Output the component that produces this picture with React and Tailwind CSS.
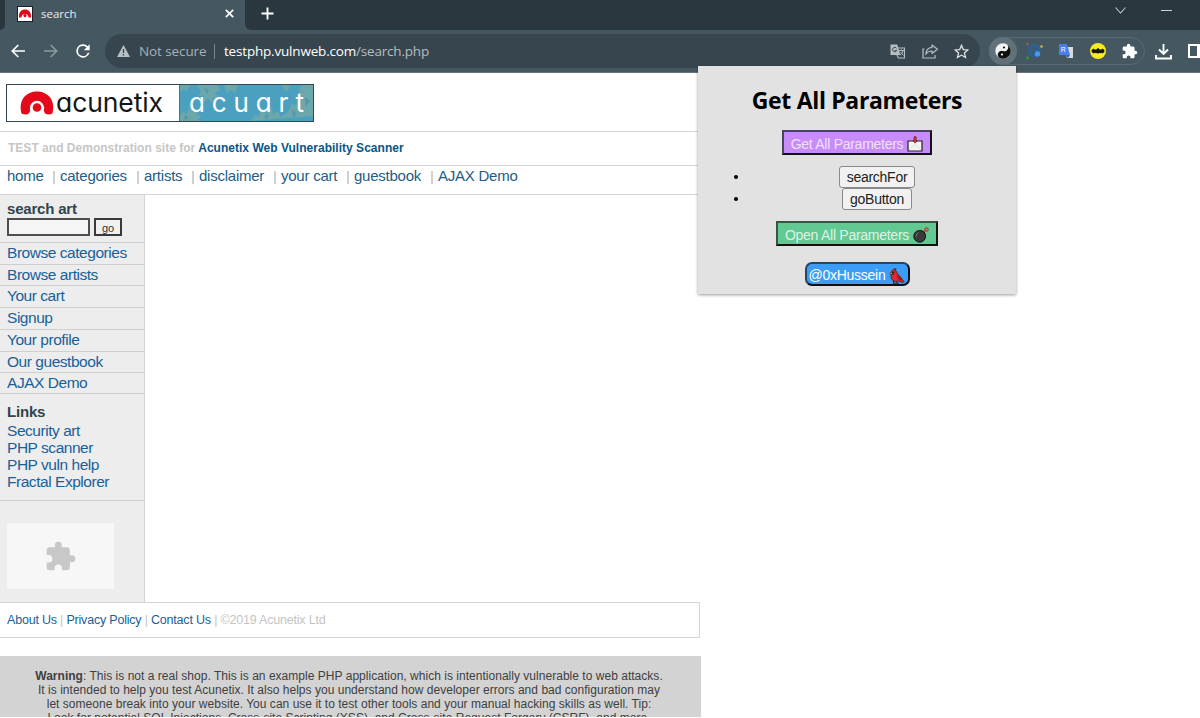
import React from "react";

const UI = "font-['Open_Sans','Noto_Sans',sans-serif]";

function Favicon() {
  return (
    <svg className="h-4 w-4 shrink-0" viewBox="0 0 16 16">
      <rect width="16" height="16" fill="#1c2025" />
      <rect x="1" y="1" width="14" height="14" fill="#fff" />
      <path d="M2 11.500C1.500 6 4.500 3.500 8 3.500s6.500 2.500 6 8h-2.500a3.500 3.500 0 0 0-7 0z" fill="#e2061b" />
      <circle cx="8" cy="9.600" r="1.600" fill="#e2061b" />
    </svg>
  );
}

const puzzle =
  "M20.500 11H19V7c0-1.100-.9-2-2-2h-4V3.500a2.500 2.500 0 0 0-5 0V5H4c-1.100 0-2 .9-2 2v3.800h1.500a2.700 2.700 0 0 1 0 5.400H2V20c0 1.100.9 2 2 2h3.800v-1.500a2.700 2.700 0 0 1 5.400 0V22H17c1.100 0 2-.9 2-2v-4h1.500a2.500 2.500 0 0 0 0-5z";

function TabStrip() {
  return (
    <div className="flex h-[30px] shrink-0 bg-[#2b373f]">
      <div className="w-[5px] bg-[#455862]">
        <div className="h-full rounded-br-[6px] bg-[#2b373f]" />
      </div>
      <div className="flex w-[240px] items-center bg-[#455862] pb-[3px] pl-[12px]">
        <Favicon />
        <span className={`${UI} ml-[8px] w-[173px] text-[11.500px] text-[#e9edef]`}>search</span>
        <svg className="ml-[11px] h-[9px] w-[9px]" viewBox="0 0 9 9" stroke="#fff" strokeWidth="1.700">
          <path d="M.8.8l7.400 7.400M8.200.8L.8 8.200" />
        </svg>
      </div>
      <div className="flex-1 bg-[#455862]">
        <div className="flex h-full rounded-bl-[6px] bg-[#2b373f] pl-[16px]">
          <svg className="mt-[7px] h-[13px] w-[13px]" viewBox="0 0 13 13" stroke="#fff" strokeWidth="1.900">
            <path d="M6.500.5v12M.5 6.500h12" />
          </svg>
          <svg className="ml-[841px] mt-[7px] h-[7px] w-[11px]" viewBox="0 0 11 7" fill="none" stroke="#c3c9cc" strokeWidth="1.100">
            <path d="M.5.500l5 5.500 5-5.500" />
          </svg>
          <div className="ml-[35px] mt-[10px] h-px w-[11px] bg-[#cfd4d7]" />
        </div>
      </div>
    </div>
  );
}

function Toolbar() {
  return (
    <div className="flex h-[43px] shrink-0 items-center border-b border-[#66757d] bg-[#455862]">
      <svg className="ml-[11px] h-[14px] w-[14px] shrink-0" viewBox="0 0 14 14" fill="none" stroke="#fff" strokeWidth="1.700">
        <path d="M14 7H1.500M7.300 1L1.300 7l6 6" />
      </svg>
      <svg className="ml-[19px] h-[14px] w-[14px] shrink-0" viewBox="0 0 14 14" fill="none" stroke="#8e9ba2" strokeWidth="1.600">
        <path d="M0 7h12.500M6.700 1l6 6-6 6" />
      </svg>
      <svg className="ml-[15px] h-[20px] w-[20px] shrink-0" viewBox="0 0 24 24" fill="#fff">
        <path d="M17.650 6.350A8 8 0 1 0 19.730 14h-2.080A6 6 0 1 1 12 6c1.660 0 3.140.690 4.220 1.780L13 11h7V4l-2.350 2.350z" />
      </svg>
      <div className={`${UI} ml-[12px] flex h-[34px] w-[875px] shrink-0 items-center rounded-full bg-[#37464e] text-[14px]`}>
        <svg className="ml-[12px] h-[12px] w-[13px]" viewBox="0 0 13 12">
          <path d="M6.500 0L13 12H0z" fill="#b9c1c5" />
          <path d="M6.500 4v4M6.500 9v1.400" stroke="#37464e" strokeWidth="1.300" />
        </svg>
        <span className="ml-[9px] w-[69px] whitespace-nowrap text-[13.500px] tracking-[-0.100px] text-[#a7b1b6]">Not secure</span>
        <span className="ml-[6px] h-[15px] w-px bg-[#76848b]" />
        <span className="ml-[9px] w-[661px] whitespace-nowrap text-[13.500px] tracking-[-0.190px] text-[#b5bdc1]">
          <span className="text-white">testphp.vulnweb.com</span>/search.php
        </span>
        <svg className="ml-[5px] h-[15px] w-[16px]" viewBox="0 0 16 15">
          <path d="M7 4h7.500v10H8.500L7 11" fill="none" stroke="#b7bec2" strokeWidth="1.100" />
          <path d="M.5.500h6.800l3 10.500H.5z" fill="#b7bec2" />
          <path d="M6.600 4.300a2.200 2.200 0 1 0 .2 2.100H4.700" fill="none" stroke="#37464e" />
          <path d="M9 6.500h5M11.500 5.500v1M13 7c-.5 2-1.500 3-3 4M10.500 8l3 3.500" fill="none" stroke="#b7bec2" />
        </svg>
        <svg className="ml-[16px] h-[15px] w-[17px]" viewBox="0 0 17 15" fill="none" stroke="#b7bec2" strokeWidth="1.200">
          <path d="M2.500 5H1v9h12v-3" />
          <path d="M10 1l5.500 4.300L10 9.500V7c-3 0-5 1-6.200 3.300C4 6.500 6 3.800 10 3.400z" strokeLinejoin="round" />
        </svg>
        <svg className="ml-[15px] h-[15px] w-[15px]" viewBox="0 0 15 15" fill="none" stroke="#e3e7e9" strokeWidth="1.200">
          <path d="M7.500 1.300l1.800 4.300 4.600.4-3.500 3 1.100 4.500-4-2.400-4 2.400L4.600 9 1.100 6l4.600-.4z" />
        </svg>
      </div>
      <div className="ml-[9px] flex h-[28px] w-[156px] shrink-0 items-center rounded-full border border-[#586972]">
        <div className="-ml-px flex h-[28px] w-[28px] shrink-0 items-center justify-center rounded-full bg-[#61717a]">
          <svg className="h-4 w-4" viewBox="0 0 16 16">
            <circle cx="8" cy="8" r="7.700" fill="#f2f2f2" />
            <path d="M8 .3a7.700 7.700 0 0 1 0 15.400a3.850 3.850 0 0 1 0-7.700a3.850 3.850 0 0 0 0-7.700z" fill="#101010" transform="rotate(20 8 8)" />
            <circle cx="9" cy="4.500" r="1.100" fill="#111" />
            <circle cx="7" cy="11.500" r="1.100" fill="#fff" />
          </svg>
        </div>
        <svg className="ml-[8px] h-[18px] w-[18px] shrink-0" viewBox="0 0 18 18">
          <circle cx="9" cy="8.500" r="5.800" fill="none" stroke="#1a69bd" strokeWidth="1.500" strokeDasharray="3 1" />
          <path d="M3.500 8.500h11M9 3v11" stroke="#2465a5" strokeWidth="1" />
          <ellipse cx="9" cy="8.500" rx="2.600" ry="5.500" fill="none" stroke="#2465a5" />
          <circle cx="12.500" cy="12" r="2.700" fill="#4798f5" />
          <circle cx="2.500" cy="2" r="1.100" fill="#c15c54" />
          <circle cx="16.500" cy="4.500" r="1.300" fill="#d5b52d" />
          <circle cx="2.500" cy="16" r="1.400" fill="#289d43" />
        </svg>
        <svg className="ml-[15px] h-[16px] w-[16px] shrink-0" viewBox="0 0 16 16">
          <path d="M6 4h9v11H9z" fill="#dadada" />
          <path d="M1 1h8l3 11H1z" fill="#4580e8" />
          <path d="M8 12h4l-2 3z" fill="#2b5bb9" />
          <text x="2.800" y="9" fill="#fff" fontSize="7" fontFamily="Liberation Sans, sans-serif">R</text>
        </svg>
        <svg className="ml-[16px] h-[16px] w-[16px] shrink-0" viewBox="0 0 16 16">
          <circle cx="8" cy="8" r="8" fill="#f8ea24" />
          <path d="M4 5.500C2.500 6 1.500 7 1.500 8s1 2 2.500 2.500c.2-1 1.600-1 2 0 .3-.7 1.500-.6 2 .5.500-1.100 1.700-1.200 2-.5.400-1 1.800-1 2 0 1.500-.5 2.500-1.500 2.500-2.500s-1-2-2.500-2.500c.3 1-1.800 1.600-2.800.4L8.700 5l-.4.500h-.6L7.300 5l-.5.900C5.800 7.100 3.700 6.500 4 5.500z" fill="#151515" />
        </svg>
        <svg className="ml-[16px] h-[16px] w-[16px] shrink-0" viewBox="1 0 23 23" fill="#fff"><path d={puzzle} /></svg>
      </div>
      <svg className="ml-[10px] h-[17px] w-[17px] shrink-0" viewBox="0 0 17 17" fill="none" stroke="#fff" strokeWidth="1.900">
        <path d="M8.500 1v9.500M4 6.500l4.500 4.500L13 6.500M1 12v3.500h15V12" />
      </svg>
      <svg className="ml-[16px] h-[14px] w-[13px] shrink-0" viewBox="0 0 13 14">
        <path d="M1 1h15v12H1z" fill="none" stroke="#fff" strokeWidth="2" />
        <path d="M9 0h4v14H9z" fill="#fff" />
      </svg>
    </div>
  );
}

function Logo() {
  return (
    <svg className="h-[38px] w-[308px]" viewBox="0 0 308 38">
      <rect x=".5" y=".5" width="307" height="37" fill="#fff" />
      <rect x="173" y="1" width="134" height="36" fill="#4ba0c0" />
      <g fill="#76aaa4" opacity=".75">
        <path d="M173 32l5-5 2 4 4-8 3 5 6-3-2 6 5 1-4 3 3 2h-22zM191 1h20l3 5-5 3 4 6-6-1-1 6-4-6-5 5 1-8-6 2 3-6zM218 1h14l-3 8-4-3-4 3zM173 1h11l-3 6-4-2-4 3z" />
        <path d="M245 37l4-6 4 1 2-7 5 5 6-7 1 7 5-3 3 6 7-5 4-9 3 3 4-10 1-9 5-3 2-4h6v36zM276 1h8l-2 6-4-2z" />
      </g>
      <g fill="#3f8fae" opacity=".6">
        <path d="M198 4l5 2-2 4zM286 25l5 5-4 4zM299 13l5 4-5 6zM258 32l5-2-2 6zM179 31l4 3-5 2z" />
      </g>
      <path d="M15.500 29.500C12 15 21 7.500 31 7.500s19 7.500 15.500 22q-4 2-7.500 0a8.200 8.200 0 0 0-16 0q-3.500 2-7.500 0z" fill="#e30a1b" />
      <circle cx="31" cy="24" r="7.200" fill="#fff" />
      <circle cx="31" cy="23.500" r="4.300" fill="#e30a1b" />
      <text x="50" y="28" textLength="107" fontSize="26.500" fill="#151515" fontFamily="Inter, sans-serif" style={{ fontFeatureSettings: '"cv11"' }}>acunetix</text>
      <text x="183" y="28" textLength="115" fontSize="26" fill="#fff" fontFamily="Inter, sans-serif" style={{ fontFeatureSettings: '"cv11"' }}>acuart</text>
      <rect x=".5" y=".5" width="307" height="37" fill="none" stroke="#35464d" />
      <path d="M173.500 1v36" stroke="#4a7180" />
    </svg>
  );
}

const nav = [
  ["home", "w-[46px]"],
  ["categories", "w-[77px]"],
  ["artists", "w-[48px]"],
  ["disclaimer", "w-[75px]"],
  ["your cart", "w-[66px]"],
  ["guestbook", "w-[77px]"],
  ["AJAX Demo", "w-[90px]"],
];

const menu = [
  ["Browse categories", "h-[22px]"],
  ["Browse artists", "h-[21px]"],
  ["Your cart", "h-[22px]"],
  ["Signup", "h-[22px]"],
  ["Your profile", "h-[22px]"],
  ["Our guestbook", "h-[21px]"],
  ["AJAX Demo", "h-[21px]"],
];

function Sidebar() {
  return (
    <aside className="flex h-[407px] w-[145px] flex-col border-r border-[#d5d5d5] bg-[#ededed] text-[15.500px] tracking-[-0.460px] text-[#17619a]">
      <div className="h-[48px] shrink-0 border-b border-[#cfcfcf] pl-[7px] pt-[5px]">
        <h3 className="text-[15px] font-bold leading-[18px] tracking-[-0.200px] text-[#2f4550]">search art</h3>
        <div className="flex gap-1">
          <div className="h-[18px] w-[83px] border-2 border-[#4e4e4e] bg-[#f5f5f5]" />
          <button className="h-[18px] w-[28px] border-2 border-[#3a3a3a] bg-[#f0f0f0] text-[11px] leading-[16px] tracking-normal text-[#333]">go</button>
        </div>
      </div>
      {menu.map(([label, h]) => (
        <a key={label} className={`${h} shrink-0 whitespace-nowrap border-b border-[#cfcfcf] pl-[7px] leading-[20px]`}>{label}</a>
      ))}
      <div className="flex h-[107px] shrink-0 flex-col border-b border-[#cfcfcf] pl-[7px] pt-[9px]">
        <h3 className="text-[15px] font-bold leading-[18px] tracking-[-0.200px] text-[#2f4550]">Links</h3>
        <a className="mt-[1px] leading-[17px]">Security art</a>
        <a className="leading-[17px]">PHP scanner</a>
        <a className="leading-[17px]">PHP vuln help</a>
        <a className="leading-[17px]">Fractal Explorer</a>
      </div>
      <div className="ml-[7px] mt-[22px] flex h-[66px] w-[107px] items-center justify-center bg-[#f7f7f7]">
        <svg className="h-[30px] w-[30px]" viewBox="1.500 .5 22 22" fill="#c8c8c8"><path d={puzzle} /></svg>
      </div>
    </aside>
  );
}

function Mail() {
  return (
    <svg className="h-4 w-4" viewBox="0 0 16 16">
      <path d="M1 5h14v10H1z" fill="#f2f2f2" stroke="#222" strokeWidth="1.200" />
      <path d="M2 14l4.500-4.500h3L14 14" fill="none" stroke="#e0e0e0" />
      <path d="M7 .8h2.200v4h1L8.100 7.200 6 4.800h1z" fill="#df3041" stroke="#4b1920" strokeWidth=".6" />
    </svg>
  );
}
function Bomb() {
  return (
    <svg className="h-4 w-4" viewBox="0 0 16 16">
      <path d="M10.500 5.500l2-2.200" stroke="#bc4b3e" strokeWidth="1.500" />
      <path d="M9 3.200l3.500 3.300-2 2-3.300-3.300z" fill="#222" />
      <circle cx="6.700" cy="9.300" r="5.900" fill="#3a3a3a" stroke="#151515" />
      <path d="M3 9.500c0-2 1-3 2.500-3.600" stroke="#858585" fill="none" />
      <circle cx="13.500" cy="2.500" r="1.800" fill="#ed6b55" stroke="#653029" strokeWidth=".7" />
    </svg>
  );
}
function Bird() {
  return (
    <svg className="h-4 w-4" viewBox="0 0 16 16">
      <path d="M4.500 12v3.200h3M8 13v2.200h2" stroke="#3d211a" strokeWidth="1.100" fill="none" />
      <path d="M2.800 3.500C3 2 4.500 1 7 .8L6.500 2.500c1.500 1 1.500 2.700 2.500 3.800 2 1.500 3 3.700 6 7.200l-1 1-4.500-1.500C5 14.500 1.500 12 2.200 7.500L1 5.500z" fill="#e4292e" stroke="#341b1c" strokeWidth=".8" />
      <path d="M7 7c2.500.5 4.500 3 6.500 6l-4-1.500z" fill="#9e171d" />
      <path d="M2.800 3.800h1.800v3L2.800 7z" fill="#292020" />
      <path d="M.8 5.500l2.200-.7.2 1.500z" fill="#f3a82b" />
      <circle cx="5.300" cy="4" r=".6" fill="#111" />
    </svg>
  );
}

function Popup() {
  return (
    <section className="absolute left-[698px] top-[66px] flex h-[228px] w-[318px] flex-col items-center bg-[#e2e2e2] text-[14px] tracking-[-0.270px] shadow-[0_1px_3px_rgba(0,0,0,0.400)]">
      <h1 className="mt-[18px] whitespace-nowrap font-['Open_Sans','Noto_Sans',sans-serif] text-[23px] font-bold leading-[32px] tracking-[-0.330px] text-black">Get All Parameters</h1>
      <button className="mt-[14px] flex h-[25px] w-[150px] items-center justify-center gap-1 whitespace-nowrap border-2 border-b-[#15101b] border-l-[#4c4452] border-r-[#15101b] border-t-[#4c4452] bg-[#c88cfa] pt-[3px] text-[#f0e2fa]">
        Get All Parameters <Mail />
      </button>
      <ul className="mt-[11px] w-full">
        {[["searchFor", "w-[76px]"], ["goButton", "w-[70px]"]].map(([name, w]) => (
          <li key={name} className="flex h-[22px] items-center">
            <span className="ml-[36px] h-[4px] w-[4px] rounded-full bg-black" />
            <span className="flex flex-1 justify-center">
              <button className={`${w} h-[22px] rounded-[3px] border border-[#8a8a8a] bg-[#f1f1f1] leading-[19px] text-[#222]`}>{name}</button>
            </span>
          </li>
        ))}
      </ul>
      <button className="mt-[11px] flex h-[25px] w-[162px] items-center justify-center gap-1 whitespace-nowrap border-2 border-b-[#0c1711] border-l-[#3c5045] border-r-[#0c1711] border-t-[#3c5045] bg-[#61c991] pt-[3px] text-[#dff3e8]">
        Open All Parameters <Bomb />
      </button>
      <button className="mt-[16px] flex h-[24px] w-[105px] items-center justify-center gap-1 whitespace-nowrap rounded-[7px] border-2 border-b-[#07121c] border-l-[#284560] border-r-[#07121c] border-t-[#284560] bg-[#3b9df5] pt-[3px] text-white">
        @0xHussein <Bird />
      </button>
    </section>
  );
}

export default function App() {
  return (
    <div className="relative flex h-[718px] w-[1200px] flex-col overflow-hidden bg-white font-['Liberation_Sans',Arial,sans-serif]">
      <TabStrip />
      <Toolbar />
      <main className="w-[701px]">
        <header className="h-[59px] border-b border-[#d5d5d5] pl-[6px] pt-[11px]"><Logo /></header>
        <div className="h-[34px] whitespace-nowrap border-b border-[#d5d5d5] pl-[8px] text-[12px] font-bold leading-[33px] tracking-[0.020px] text-[#c6c6c6]">
          TEST and Demonstration site for <span className="text-[#075688]">Acunetix Web Vulnerability Scanner</span>
        </div>
        <nav className="flex h-[29px] border-b border-[#d5d5d5] pl-[7px] text-[15px] leading-[20px] tracking-[-0.240px] text-[#235d84]">
          {nav.map(([label, w], i) => (
            <a key={label} className={`${w} box-content shrink-0 whitespace-nowrap ${i ? "pl-[7px]" : ""}`}>
              <span className={i ? "-ml-[7px] inline-block" : "inline-block"}>
                {i > 0 && <i className="mr-[5px] inline-block h-[13px] w-[2px] translate-y-[3px] bg-[#d0d0d0]" />}
                {label}
              </span>
            </a>
          ))}
        </nav>
        <Sidebar />
        <footer className="h-[36px] w-[700px] whitespace-nowrap border-b border-r border-t border-[#d5d5d5] pl-[7px] text-[12.500px] leading-[34px] tracking-[-0.200px] text-[#c4c4c4]">
          <a className="text-[#17619a]">About Us</a> | <a className="text-[#17619a]">Privacy Policy</a> | <a className="text-[#17619a]">Contact Us</a> | ©2019 Acunetix Ltd
        </footer>
        <div className="mt-[18px] h-[61px] overflow-hidden bg-[#d3d3d3] pr-[3px] pt-[13px] text-center text-[12px] leading-[14px] tracking-[0.025px] text-[#404040]">
          <p className="whitespace-nowrap"><b>Warning</b>: This is not a real shop. This is an example PHP application, which is intentionally vulnerable to web attacks.</p>
          <p className="whitespace-nowrap">It is intended to help you test Acunetix. It also helps you understand how developer errors and bad configuration may</p>
          <p className="whitespace-nowrap">let someone break into your website. You can use it to test other tools and your manual hacking skills as well. Tip:</p>
          <p className="whitespace-nowrap">Look for potential SQL Injections, Cross-site Scripting (XSS), and Cross-site Request Forgery (CSRF), and more.</p>
        </div>
      </main>
      <Popup />
    </div>
  );
}
